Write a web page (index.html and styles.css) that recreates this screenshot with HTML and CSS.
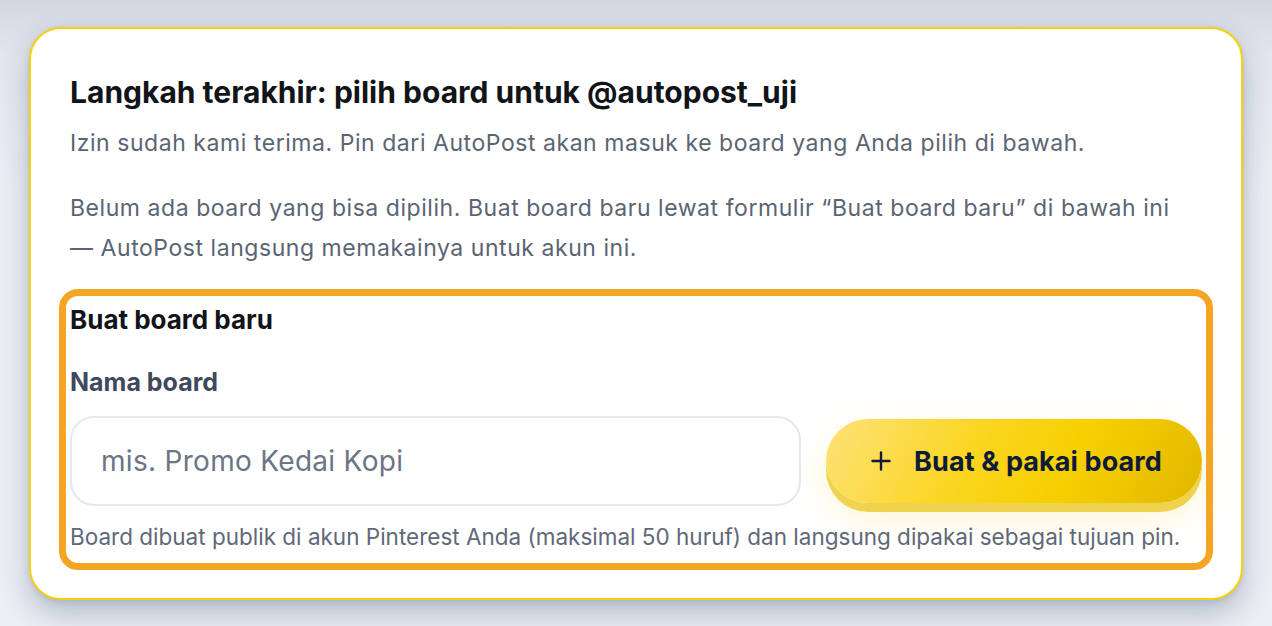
FILE: index.html
```html
<!DOCTYPE html>
<html lang="id">
<head>
<meta charset="utf-8">
<title>Pilih board</title>
<link rel="stylesheet" href="styles.css">
</head>
<body>
<div class="page">
  <div class="card">
    <h1 class="title">Langkah terakhir: pilih board untuk @autopost_uji</h1>
    <p class="lead">Izin sudah kami terima. Pin dari AutoPost akan masuk ke board yang Anda pilih di bawah.</p>
    <p class="note">Belum ada board yang bisa dipilih. Buat board baru lewat formulir “Buat board baru” di bawah ini —&nbsp;AutoPost langsung memakainya untuk akun ini.</p>
    <section class="create">
      <h2 class="create-title">Buat board baru</h2>
      <label class="label" for="board-name">Nama board</label>
      <div class="row">
        <input id="board-name" class="input" type="text" placeholder="mis. Promo Kedai Kopi">
        <button class="btn" type="button">
          <svg class="btn-icon" viewBox="0 0 20 20" width="20" height="20" aria-hidden="true"><path d="M10 1.5v17M1.5 10h17" stroke="currentColor" stroke-width="2.4" stroke-linecap="round" fill="none"/></svg>
          <span>Buat &amp; pakai board</span>
        </button>
      </div>
      <p class="help">Board dibuat publik di akun Pinterest Anda (maksimal 50 huruf) dan langsung dipakai sebagai tujuan pin.</p>
    </section>
  </div>
</div>
</body>
</html>
```
FILE: styles.css
```css
* { box-sizing: border-box; }
html, body { margin: 0; height: 100%; }
body {
  font-family: Inter, "Noto Sans", "Liberation Sans", sans-serif;
  background: linear-gradient(180deg, #d2d7e1 0px, #e3e7ef 60px, #eceff5 200px);
  color: #111418;
}
.page {
  padding: 27px 29px 28px;
}
.card {
  background: #fff;
  border: 2px solid #f7d00c;
  border-radius: 32px;
  padding: 45px 39px 39px;
  box-shadow: 0 14px 30px rgba(40, 56, 90, 0.28), 0 2px 6px rgba(40, 56, 90, 0.12);
}
.title {
  margin: 0;
  font-size: 30px;
  font-weight: 700;
  line-height: 36px;
  letter-spacing: 0;
  color: #111418;
}
.lead, .note {
  margin: 0;
  font-size: 23px;
  line-height: 40px;
  color: #5b6473;
  letter-spacing: 0.55px;
}
.lead { margin-top: 13px; }
.note { margin-top: 25px; }
.create {
  margin-top: 32px;
  border-radius: 8px;
  outline: 7px solid #f5a524;
  outline-offset: 4px;
  padding: 0 0 7px;
}
.create-title {
  margin: 0;
  font-size: 26px;
  font-weight: 700;
  line-height: 40px;
  color: #111418;
}
.label {
  display: block;
  margin-top: 27px;
  font-size: 25px;
  font-weight: 700;
  line-height: 30px;
  color: #3e4a5c;
}
.row {
  display: flex;
  align-items: flex-start;
  gap: 25px;
  margin-top: 19px;
}
.input {
  flex: 1;
  min-width: 0;
  height: 90px;
  border: 2px solid #e3e8f1;
  border-radius: 24px;
  padding: 0 29px;
  font-family: inherit;
  font-size: 28px;
  letter-spacing: 0.3px;
  color: #111418;
  background: #fff;
  outline: none;
}
.input::placeholder { color: #6b7585; }
.btn {
  flex: 0 0 376px;
  height: 84px;
  margin-top: 3px;
  border: none;
  border-radius: 42px;
  background: linear-gradient(120deg, #fde27a 0%, #fbd51e 40%, #f6cf00 65%, #e2b700 100%);
  box-shadow: 0 9px 0 #efd24e, 0 14px 40px rgba(250, 210, 40, 0.22);
  color: #0d1b38;
  font-family: inherit;
  font-size: 27px;
  font-weight: 700;
  letter-spacing: 0.1px;
  display: flex;
  align-items: center;
  justify-content: center;
  gap: 23px;
  padding: 0 0 0 5px;
  cursor: pointer;
}
.btn-icon { flex: none; }
.help {
  margin: 16px 0 0;
  font-size: 22.5px;
  line-height: 30px;
  color: #5f6878;
}
```
